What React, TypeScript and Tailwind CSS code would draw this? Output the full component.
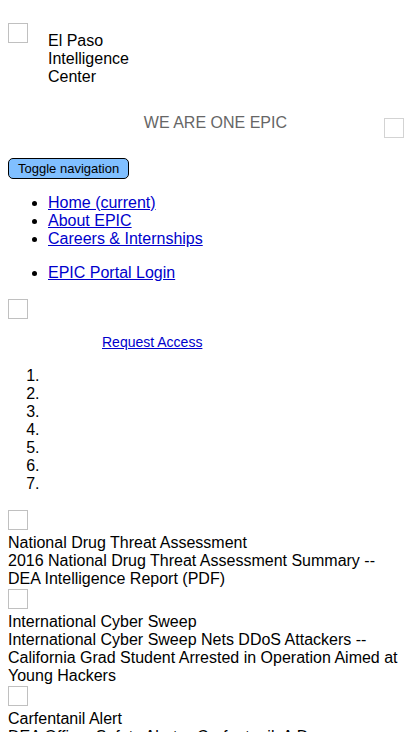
import type { ReactNode } from "react";

function Placeholder({ label }: { label: string }) {
  return (
    <div
      role="img"
      aria-label={label}
      className="size-5 shrink-0 border border-[#c0c0c0]"
    />
  );
}

function NavLink({ children }: { children: ReactNode }) {
  return (
    <li>
      <a href="#" className="text-[#0000cc] underline">
        {children}
      </a>
    </li>
  );
}

const stories = [
  {
    title: "National Drug Threat Assessment",
    text: "2016 National Drug Threat Assessment Summary -- DEA Intelligence Report (PDF)",
  },
  {
    title: "International Cyber Sweep",
    text: "International Cyber Sweep Nets DDoS Attackers -- California Grad Student Arrested in Operation Aimed at Young Hackers",
  },
  {
    title: "Carfentanil Alert",
    text: "DEA Officer Safety Alert -- Carfentanil: A Dangerous",
  },
];

const slides = [1, 2, 3, 4, 5, 6, 7];

export default function App() {
  return (
    <div className="min-h-screen bg-white px-2 font-['Liberation_Sans',Arial,sans-serif] text-base leading-[18px] text-black">
      <header>
        <div className="flex items-start gap-5 pt-[23px]">
          <Placeholder label="EPIC seal" />
          <p className="w-24 pt-[9px]">El Paso Intelligence Center</p>
        </div>
        <div className="flex items-start justify-end pt-7">
          <p className="mr-[97px] text-[#666666]">WE ARE ONE EPIC</p>
          <div className="pt-1 opacity-70">
            <Placeholder label="Agency seal" />
          </div>
        </div>
      </header>

      <nav className="pt-5">
        <button
          type="button"
          className="block h-[21px] rounded-[5px] border border-black bg-[#80bfff] px-[9px] text-[13px] leading-[19px]"
        >
          Toggle navigation
        </button>
        <ul className="mt-[15px] list-disc pl-10">
          <NavLink>Home (current)</NavLink>
          <NavLink>About EPIC</NavLink>
          <NavLink>Careers &amp; Internships</NavLink>
        </ul>
        <ul className="mt-4 list-disc pl-10">
          <NavLink>EPIC Portal Login</NavLink>
        </ul>
      </nav>

      <main>
        <div className="pt-[17px]">
          <Placeholder label="Portal banner" />
        </div>
        <p className="pt-[15px] pl-[94px] text-sm leading-4">
          <a href="#" className="text-[#0000cc] underline">
            Request Access
          </a>
        </p>
        <ol className="mt-[17px] mb-[17px] list-decimal pl-9">
          {slides.map((n) => (
            <li key={n} className="h-[18px]" />
          ))}
        </ol>
        {stories.map((s) => (
          <article key={s.title} className="mb-px">
            <Placeholder label={s.title} />
            <h2 className="pt-1">{s.title}</h2>
            <p>{s.text}</p>
          </article>
        ))}
      </main>
    </div>
  );
}
